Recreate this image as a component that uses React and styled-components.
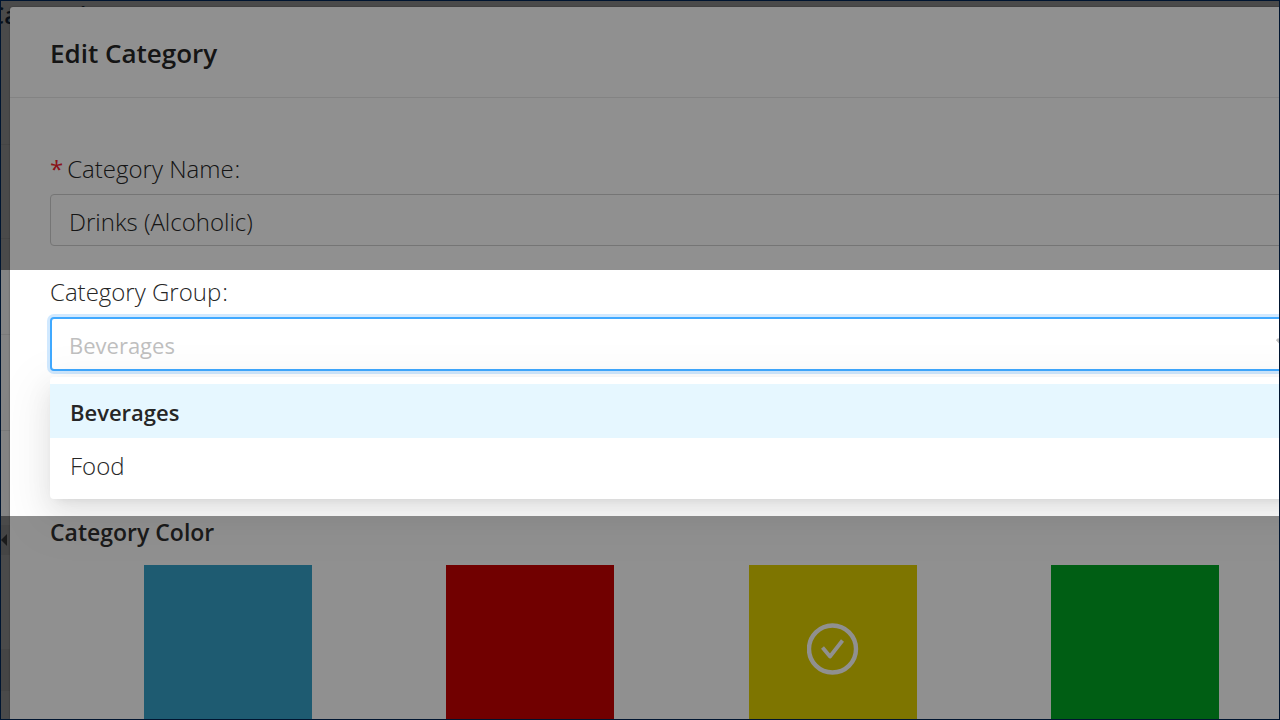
import { useState } from "react";
import styled, { createGlobalStyle } from "styled-components";

const groups = ["Beverages", "Food"];

const colors = [
    { name: "Blue", value: "#36a2c9" },
    { name: "Red", value: "#c80000" },
    { name: "Yellow", value: "#e0d000" },
    { name: "Green", value: "#00a624" },
];

const App = () => {
    const [name, setName] = useState("Drinks (Alcoholic)");
    const [group, setGroup] = useState("Beverages");
    const [color, setColor] = useState("Yellow");

    return (
        <Screen>
            <GlobalStyle />
            <Page>
                <PageTitle>Categories</PageTitle>
                <PageRows>
                    <PageRow $size={94} />
                    <PageRow $size={94} />
                    <PageRow $size={96} />
                    <PageRow $size={96} />
                    <PageRow $size={95} />
                    <PageRow $size={29} $shaded>
                        <CollapseIcon viewBox="0 0 6 12" aria-hidden="true">
                            <path d="M6 0v12L0 6z" fill="#303030" />
                        </CollapseIcon>
                    </PageRow>
                    <PageRow $size={95} />
                    <PageRow $size={41} $shaded />
                </PageRows>
            </Page>

            <Modal role="dialog" aria-labelledby="modal-title">
                <ModalHeader>
                    <ModalTitle id="modal-title">Edit Category</ModalTitle>
                </ModalHeader>
                <Form>
                    <Label htmlFor="category-name">
                        <Required>*</Required>
                        Category Name<Colon>:</Colon>
                    </Label>
                    <TextInput
                        id="category-name"
                        value={name}
                        onChange={(e) => setName(e.target.value)}
                    />

                    <Label htmlFor="category-group">
                        Category Group<Colon>:</Colon>
                    </Label>
                    <SelectWrapper>
                        <Select
                            id="category-group"
                            value={group}
                            onChange={(e) => setGroup(e.target.value)}
                        >
                            {groups.map((item) => (
                                <option key={item}>{item}</option>
                            ))}
                        </Select>
                        <SelectArrow viewBox="0 0 18 12" aria-hidden="true">
                            <path d="M1 1l8 9 8-9" fill="none" stroke="#bfbfbf" strokeWidth="3" />
                        </SelectArrow>
                        <Menu role="listbox" aria-label="Category Group">
                            {groups.map((item) => (
                                <MenuItem
                                    key={item}
                                    role="option"
                                    aria-selected={item === group}
                                    $selected={item === group}
                                    onClick={() => setGroup(item)}
                                >
                                    {item}
                                </MenuItem>
                            ))}
                        </Menu>
                    </SelectWrapper>

                    <SectionTitle>Category Color</SectionTitle>
                    <Swatches>
                        {colors.map((item) => (
                            <Swatch
                                key={item.name}
                                type="button"
                                aria-label={item.name}
                                aria-pressed={item.name === color}
                                $color={item.value}
                                onClick={() => setColor(item.name)}
                            >
                                {item.name === color && (
                                    <CheckIcon viewBox="0 0 52 52" aria-hidden="true">
                                        <circle cx="25.5" cy="26" r="23.5" strokeWidth="4.4" />
                                        <path d="M15.5 24.5L23 33.5L35.5 17.5" strokeWidth="3.8" />
                                    </CheckIcon>
                                )}
                            </Swatch>
                        ))}
                    </Swatches>
                </Form>
            </Modal>

            <Spotlight />
        </Screen>
    );
};

export default App;

const GlobalStyle = createGlobalStyle`
    * {
        box-sizing: border-box;
    }

    body {
        margin: 0;
        font-family: "Open Sans", "Noto Sans", sans-serif;
        color: #262626;
    }
`;

const Screen = styled.div`
    position: relative;
    height: 100vh;
    overflow: hidden;
    border: 1px solid #001530;
`;

const Page = styled.div`
    height: 100%;
    background: #848484;
`;

const PageTitle = styled.h1`
    height: 50px;
    margin: 0 0 0 -12px;
    font-size: 24px;
    font-weight: 600;
    line-height: 28px;
    color: #101c2c;
`;

const PageRows = styled.div`
    display: flex;
    flex-direction: column;
`;

const PageRow = styled.div`
    display: flex;
    align-items: center;
    height: ${(props) => props.$size}px;
    border-bottom: 1px solid #7a7a7a;
    background: ${(props) => (props.$shaded ? "#7a7a7a" : "transparent")};
`;

const CollapseIcon = styled.svg`
    width: 6px;
    height: 12px;
`;

const Modal = styled.section`
    position: absolute;
    top: 6px;
    right: -74px;
    bottom: 0;
    left: 9px;
    border-radius: 3px 0 0 0;
    background: #ffffff;
    box-shadow: 0 0 2px rgba(0, 0, 0, 0.4);
`;

const ModalHeader = styled.header`
    padding: 27px 40px 25px;
    border-bottom: 1px solid #e8e8e8;
`;

const ModalTitle = styled.h2`
    margin: 0;
    font-size: 26px;
    font-weight: 600;
    line-height: 38px;
    color: #262626;
`;

const Form = styled.form`
    display: flex;
    flex-direction: column;
    padding: 52px 40px 0;
`;

const Label = styled.label`
    display: flex;
    align-items: center;
    height: 36px;
    margin-bottom: 8px;
    font-size: 24px;
    font-weight: 300;
`;

const Required = styled.span`
    margin-right: 4px;
    font-weight: 400;
    color: #f5222d;
`;

const Colon = styled.span`
    margin-left: 1px;
`;

const TextInput = styled.input`
    height: 52px;
    margin-bottom: 27px;
    padding: 2px 18px 0;
    border: 1px solid #d0d0d0;
    border-radius: 4px;
    outline: none;
    background: #ffffff;
    font: inherit;
    font-size: 24px;
    font-weight: 300;
    color: inherit;
`;

const SelectWrapper = styled.div`
    position: relative;
    margin-bottom: 144px;
`;

const Select = styled.select`
    display: block;
    width: 100%;
    height: 54px;
    padding: 1px 17px 0;
    appearance: none;
    border: 2px solid #40a9ff;
    border-radius: 4px;
    outline: none;
    background: #ffffff;
    box-shadow: 0 0 0 3px #d1e9ff;
    font: inherit;
    font-size: 22px;
    color: #bfbfbf;
`;

const SelectArrow = styled.svg`
    position: absolute;
    top: 21px;
    right: 19px;
    width: 18px;
    height: 12px;
`;

const Menu = styled.ul`
    position: absolute;
    top: calc(100% + 6px);
    left: 0;
    right: 0;
    margin: 0;
    padding: 7px 0;
    list-style: none;
    border-radius: 4px;
    background: #ffffff;
    box-shadow:
        0 5px 10px -7px rgba(0, 0, 0, 0.12),
        0 10px 27px rgba(0, 0, 0, 0.08),
        0 15px 48px 14px rgba(0, 0, 0, 0.05);
`;

const MenuItem = styled.li`
    padding: 2px 20px 0;
    font-size: ${(props) => (props.$selected ? 22 : 24)}px;
    font-weight: ${(props) => (props.$selected ? 600 : 300)};
    line-height: 52px;
    color: #262626;
    background: ${(props) => (props.$selected ? "#e6f7ff" : "transparent")};
    cursor: pointer;
`;

const SectionTitle = styled.h3`
    margin: 0 0 16px;
    font-size: 23px;
    font-weight: 600;
    line-height: 34px;
    color: #303030;
`;

const Swatches = styled.div`
    display: grid;
    grid-template-columns: repeat(4, 1fr);
    justify-items: center;
    padding: 0 27px;
`;

const Swatch = styled.button`
    display: flex;
    align-items: center;
    justify-content: center;
    width: 168px;
    height: 168px;
    padding: 0;
    border: none;
    background: ${(props) => props.$color};
    cursor: pointer;
`;

const CheckIcon = styled.svg`
    width: 52px;
    height: 52px;
    fill: none;
    stroke: #ffffff;
    stroke-linejoin: round;
`;

/* everything outside the highlighted band is dimmed by the outer shadow */
const Spotlight = styled.div`
    position: absolute;
    top: 269px;
    left: 0;
    right: 0;
    height: 246px;
    box-shadow: 0 0 0 100vmax rgba(0, 0, 0, 0.435);
    pointer-events: none;
`;
